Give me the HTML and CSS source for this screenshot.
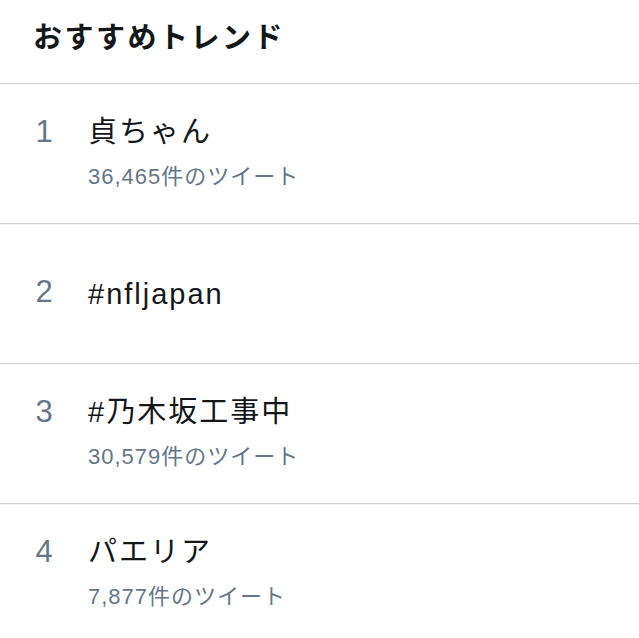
FILE: index.html
```html
<!DOCTYPE html>
<html lang="ja">
<head>
<meta charset="utf-8">
<title>おすすめトレンド</title>
<link rel="stylesheet" href="styles.css">
</head>
<body>
<div class="trends">
  <div class="header"><h1 class="header-title">おすすめトレンド</h1></div>
  <div class="row">
    <div class="rank">1</div>
    <div class="info">
      <div class="name">貞ちゃん</div>
      <div class="count">36,465件のツイート</div>
    </div>
  </div>
  <div class="row row-single">
    <div class="rank">2</div>
    <div class="info">
      <div class="name">#nfljapan</div>
    </div>
  </div>
  <div class="row">
    <div class="rank">3</div>
    <div class="info">
      <div class="name">#乃木坂工事中</div>
      <div class="count">30,579件のツイート</div>
    </div>
  </div>
  <div class="row">
    <div class="rank">4</div>
    <div class="info">
      <div class="name">パエリア</div>
      <div class="count">7,877件のツイート</div>
    </div>
  </div>
</div>
</body>
</html>
```
FILE: styles.css
```css
html, body {
  margin: 0;
  padding: 0;
  background: #ffffff;
}
body {
  font-family: "Liberation Sans", "Noto Sans CJK JP", sans-serif;
  color: #14171a;
}
.trends {
  display: flex;
  flex-direction: column;
}
.header {
  box-sizing: border-box;
  height: 84px;
  display: flex;
  align-items: center;
  padding-left: 33px;
  border-bottom: 1px solid #cdd1d5;
  box-shadow: 0 1px 0 #f4f6f8;
}
.header-title {
  margin: 0;
  font-family: "Noto Sans CJK JP", sans-serif;
  font-size: 29px;
  font-weight: 700;
  letter-spacing: 2.5px;
  line-height: 1;
  padding-bottom: 12px;
}
.row {
  box-sizing: border-box;
  height: 140px;
  display: flex;
  align-items: center;
  padding-left: 33px;
  border-bottom: 1px solid #cdd1d5;
  box-shadow: 0 1px 0 #f4f6f8;
}
.rank {
  width: 22px;
  text-align: center;
  font-size: 31px;
  color: #657786;
  align-self: flex-start;
  margin-top: 28px;
  line-height: 40px;
}
.row-single .rank {
  align-self: center;
  margin-top: 0;
  margin-bottom: 3px;
}
.info {
  margin-left: 33px;
  display: flex;
  flex-direction: column;
}
.name {
  font-size: 29px;
  line-height: 40px;
  letter-spacing: 2px;
  margin-top: -3px;
}
.row-single .name {
  margin-top: 0;
}
.count {
  font-size: 22px;
  line-height: 30px;
  margin-top: 10px;
  color: #657786;
  letter-spacing: 1px;
}
```
